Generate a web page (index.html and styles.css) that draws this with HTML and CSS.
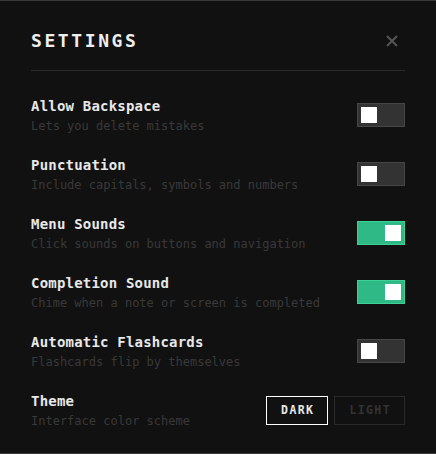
FILE: index.html
```html
<!DOCTYPE html>
<html lang="en">
<head>
<meta charset="utf-8">
<title>Settings</title>
<link rel="stylesheet" href="styles.css">
</head>
<body>
<div class="modal">
  <div class="header">
    <h1 class="title">SETTINGS</h1>
    <button class="close" aria-label="Close">
      <svg width="12" height="12" viewBox="0 0 12 12"><path d="M1 1L11 11M11 1L1 11" stroke="#555" stroke-width="2" fill="none"/></svg>
    </button>
  </div>
  <div class="list">
    <div class="row">
      <div class="text"><div class="label">Allow Backspace</div><div class="desc">Lets you delete mistakes</div></div>
      <div class="toggle"><span class="knob"></span></div>
    </div>
    <div class="row">
      <div class="text"><div class="label">Punctuation</div><div class="desc">Include capitals, symbols and numbers</div></div>
      <div class="toggle"><span class="knob"></span></div>
    </div>
    <div class="row">
      <div class="text"><div class="label">Menu Sounds</div><div class="desc">Click sounds on buttons and navigation</div></div>
      <div class="toggle on"><span class="knob"></span></div>
    </div>
    <div class="row">
      <div class="text"><div class="label">Completion Sound</div><div class="desc">Chime when a note or screen is completed</div></div>
      <div class="toggle on"><span class="knob"></span></div>
    </div>
    <div class="row">
      <div class="text"><div class="label">Automatic Flashcards</div><div class="desc">Flashcards flip by themselves</div></div>
      <div class="toggle"><span class="knob"></span></div>
    </div>
    <div class="row">
      <div class="text"><div class="label">Theme</div><div class="desc">Interface color scheme</div></div>
      <div class="seg">
        <button class="segbtn active">DARK</button>
        <button class="segbtn">LIGHT</button>
      </div>
    </div>
  </div>
</div>
</body>
</html>
```
FILE: styles.css
```css
* { box-sizing: border-box; }
html, body { margin: 0; padding: 0; background: #111111; }
body { font-family: "DejaVu Sans Mono", "Liberation Mono", monospace; color: #e8e8e8; }
.modal {
  height: 454px;
  border-top: 1px solid #3a3a3a;
  border-bottom: 1px solid #3a3a3a;
  padding: 28px 31px 0 31px;
}
.header {
  display: flex;
  justify-content: space-between;
  align-items: center;
  padding-bottom: 17px;
  border-bottom: 1px solid #2a2a2a;
}
.title {
  margin: 0;
  font-size: 18px;
  line-height: 24px;
  font-weight: bold;
  letter-spacing: 2.6px;
  color: #eeeeee;
}
.close {
  background: none;
  border: 0;
  padding: 0;
  margin-right: 7px;
  width: 12px;
  height: 12px;
  display: flex;
}
.list {
  display: flex;
  flex-direction: column;
  gap: 23px;
  padding-top: 26px;
}
.row {
  display: flex;
  justify-content: space-between;
  align-items: center;
  height: 36px;
}
.label {
  font-size: 14px;
  line-height: 18px;
  font-weight: bold;
  letter-spacing: 0.2px;
  color: #e8e8e8;
}
.desc {
  font-size: 12px;
  line-height: 16px;
  margin-top: 3px;
  color: #393939;
}
.toggle {
  width: 48px;
  height: 24px;
  border: 1px solid #464646;
  background: #333333;
  padding: 3px;
  display: flex;
  justify-content: flex-start;
}
.toggle.on {
  background: #2fb986;
  border-color: #3fd098;
  justify-content: flex-end;
}
.knob {
  width: 16px;
  height: 16px;
  background: #ffffff;
}
.seg {
  display: flex;
  gap: 6px;
}
.segbtn {
  font-family: inherit;
  font-size: 11.5px;
  font-weight: bold;
  letter-spacing: 1.4px;
  height: 29px;
  padding: 0 13px 0 14px;
  background: transparent;
  border: 1px solid #2a2a2a;
  color: #333333;
}
.segbtn.active {
  border-color: #ffffff;
  color: #e8e8e8;
}
```
